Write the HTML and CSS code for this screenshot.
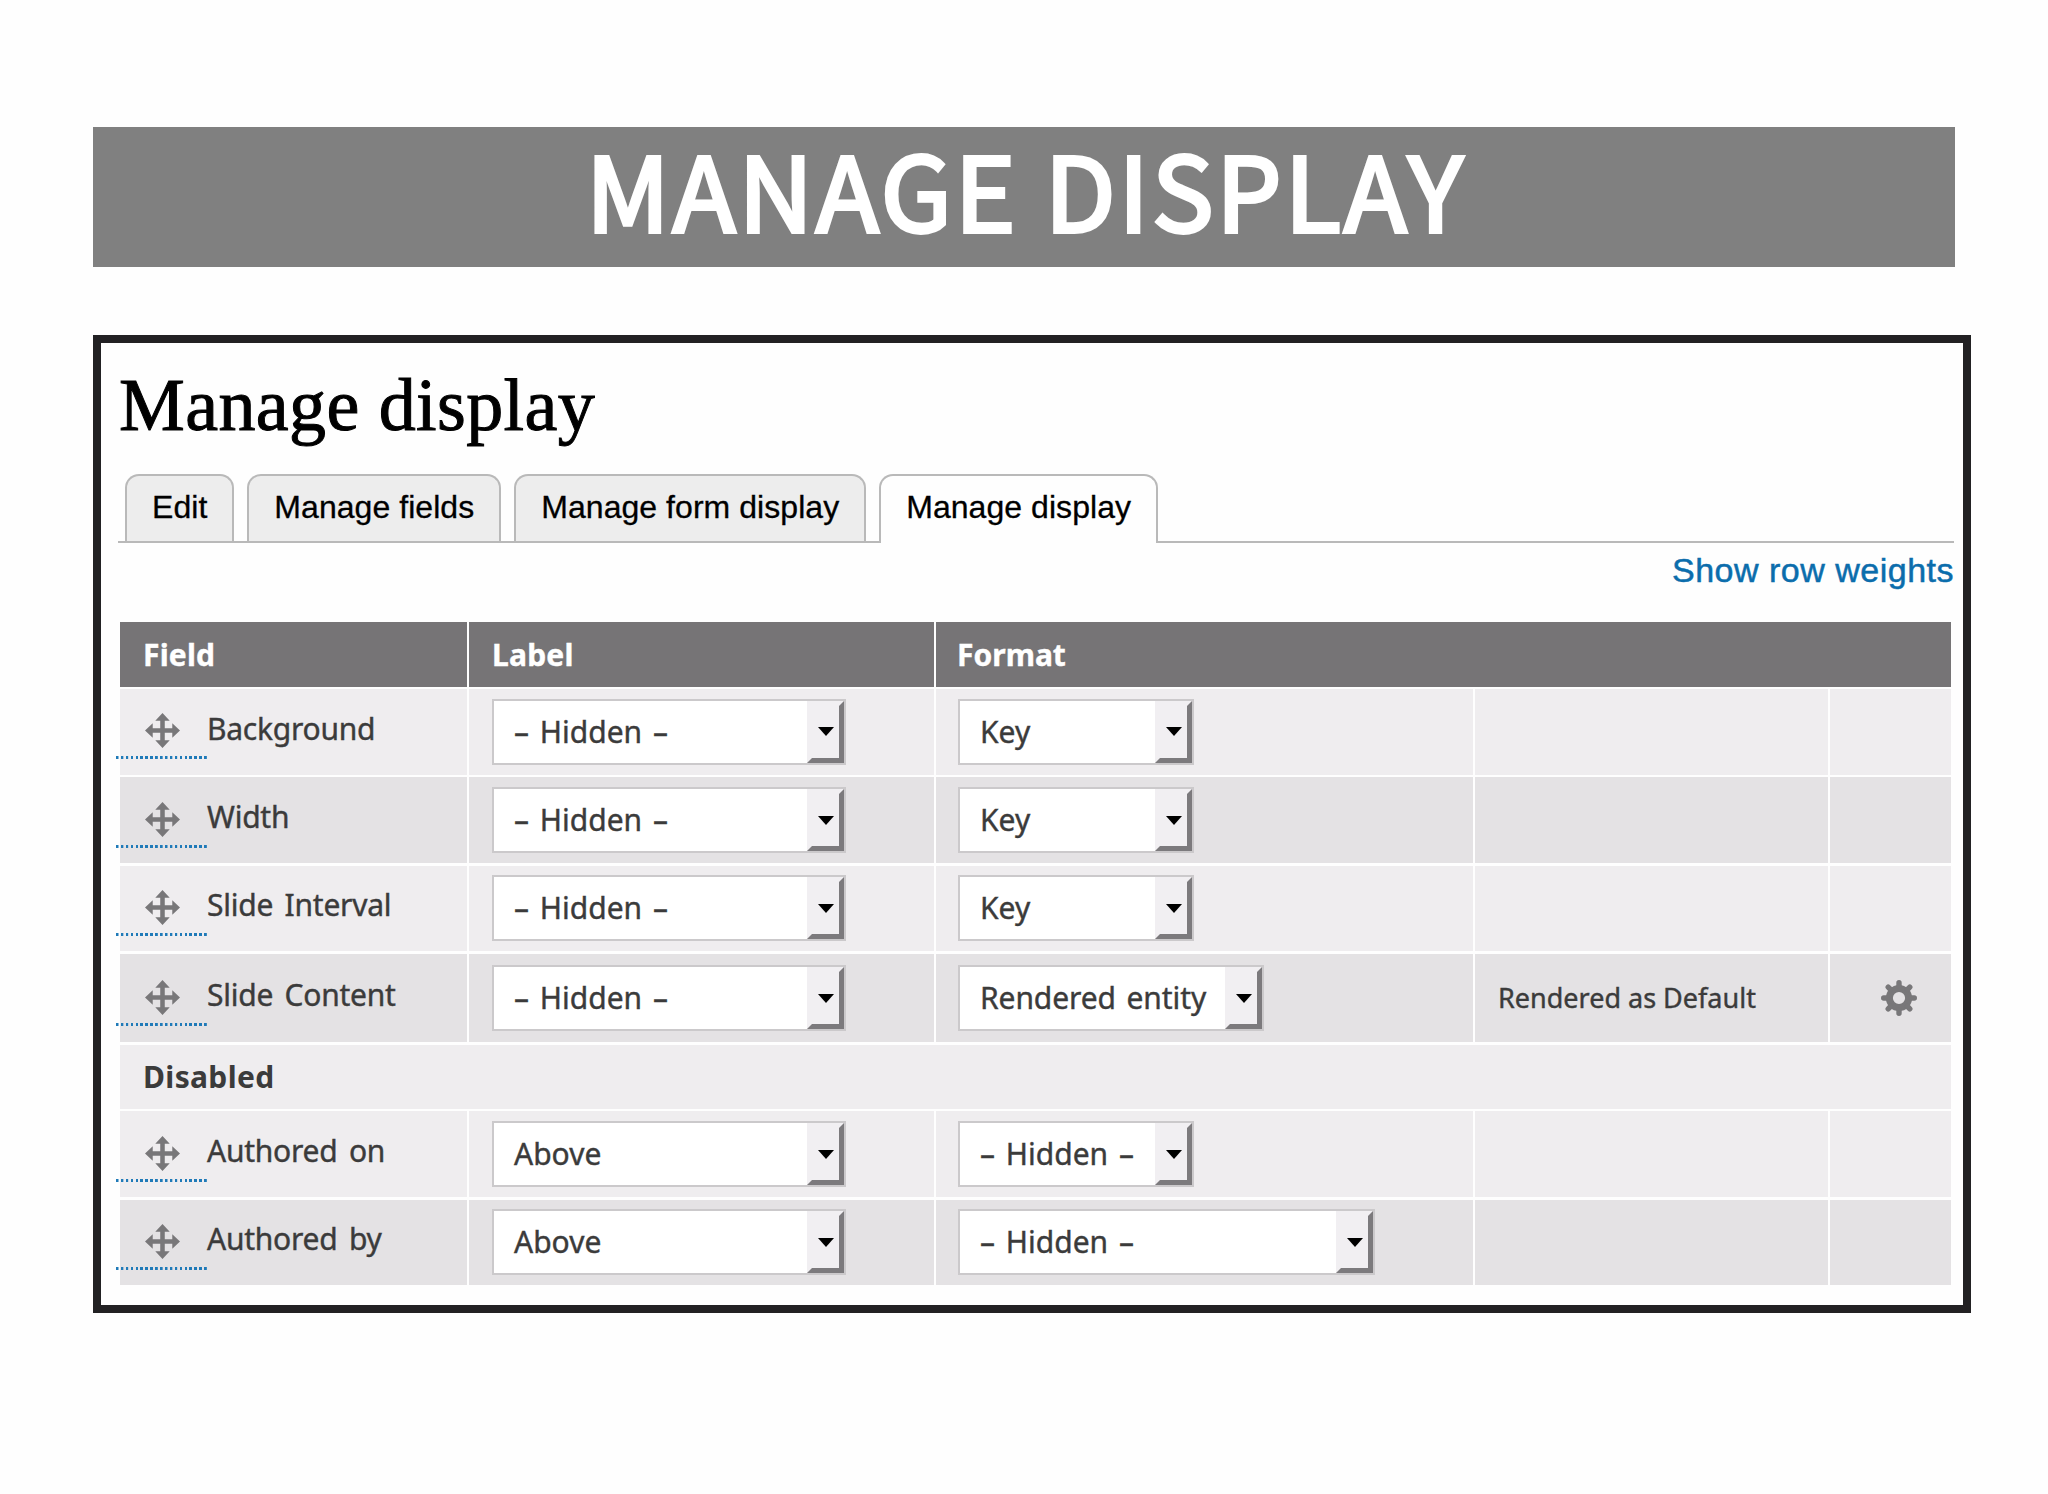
FILE: index.html
```html
<!DOCTYPE html>
<html lang="en">
<head>
    <meta charset="UTF-8">
    <meta name="viewport" content="width=device-width, initial-scale=1.0">
    <title>Manage display</title>
    <link rel="stylesheet" href="styles.css">
</head>
<body>
    <!-- shared icons -->
    <svg class="sprite" width="0" height="0">
        <symbol id="move" viewBox="0 0 34 34">
            <path d="M17 0 L24 7.5 H19.2 V14.8 H26.5 V10 L34 17 L26.5 24 V19.2 H19.2 V26.5 H24 L17 34 L10 26.5 H14.8 V19.2 H7.5 V24 L0 17 L7.5 10 V14.8 H14.8 V7.5 H10 Z"/>
        </symbol>
        <symbol id="gear" viewBox="-18 -18 36 36">
            <circle r="9.6" fill="none" stroke="#787779" stroke-width="7"/>
            <g stroke="#787779" stroke-width="5.4" stroke-linecap="round">
                <path d="M0 -12 V-15.3 M0 12 V15.3 M-12 0 H-15.3 M12 0 H15.3"/>
                <path d="M8.5 -8.5 L10.8 -10.8 M-8.5 -8.5 L-10.8 -10.8 M8.5 8.5 L10.8 10.8 M-8.5 8.5 L-10.8 10.8"/>
            </g>
        </symbol>
    </svg>

    <h1 class="slide-title">MANAGE DISPLAY</h1>

    <div class="panel">
        <h2 class="page-title">Manage display</h2>
        <nav class="tabs">
            <a class="tab">Edit</a>
            <a class="tab">Manage fields</a>
            <a class="tab">Manage form display</a>
            <a class="tab active">Manage display</a>
        </nav>
        <div class="weights"><a>Show row weights</a></div>

        <div class="table">
            <div class="row head">
                <div class="cell">Field</div>
                <div class="cell">Label</div>
                <div class="cell wide">Format</div>
            </div>
            <div class="row">
                <div class="cell field"><a class="handle"><svg><use href="#move"/></svg></a><span class="name">Background</span></div>
                <div class="cell"><div class="select label"><span>– Hidden –</span><i></i></div></div>
                <div class="cell format"><div class="select short"><span>Key</span><i></i></div></div>
                <div class="cell"></div>
                <div class="cell"></div>
            </div>
            <div class="row even">
                <div class="cell field"><a class="handle"><svg><use href="#move"/></svg></a><span class="name">Width</span></div>
                <div class="cell"><div class="select label"><span>– Hidden –</span><i></i></div></div>
                <div class="cell format"><div class="select short"><span>Key</span><i></i></div></div>
                <div class="cell"></div>
                <div class="cell"></div>
            </div>
            <div class="row">
                <div class="cell field"><a class="handle"><svg><use href="#move"/></svg></a><span class="name">Slide Interval</span></div>
                <div class="cell"><div class="select label"><span>– Hidden –</span><i></i></div></div>
                <div class="cell format"><div class="select short"><span>Key</span><i></i></div></div>
                <div class="cell"></div>
                <div class="cell"></div>
            </div>
            <div class="row even tall">
                <div class="cell field"><a class="handle"><svg><use href="#move"/></svg></a><span class="name">Slide Content</span></div>
                <div class="cell"><div class="select label"><span>– Hidden –</span><i></i></div></div>
                <div class="cell format"><div class="select medium"><span>Rendered entity</span><i></i></div></div>
                <div class="cell summary">Rendered as Default</div>
                <div class="cell"><svg class="gear"><use href="#gear"/></svg></div>
            </div>
            <div class="row region">
                <div class="cell full">Disabled</div>
            </div>
            <div class="row">
                <div class="cell field"><a class="handle"><svg><use href="#move"/></svg></a><span class="name">Authored on</span></div>
                <div class="cell"><div class="select label"><span>Above</span><i></i></div></div>
                <div class="cell format"><div class="select short"><span>– Hidden –</span><i></i></div></div>
                <div class="cell"></div>
                <div class="cell"></div>
            </div>
            <div class="row even">
                <div class="cell field"><a class="handle"><svg><use href="#move"/></svg></a><span class="name">Authored by</span></div>
                <div class="cell"><div class="select label"><span>Above</span><i></i></div></div>
                <div class="cell format"><div class="select long"><span>– Hidden –</span><i></i></div></div>
                <div class="cell"></div>
                <div class="cell"></div>
            </div>
        </div>
    </div>
</body>
</html>
```
FILE: styles.css
```css
* {
    box-sizing: border-box;
}
body {
    margin: 0;
    padding: 127px 77px 0 93px;
    height: 1494px;
    overflow: hidden;
    background-color: #fefefe;
    color: #3b3b3b;
    font-family: "Noto Sans", "Open Sans", sans-serif;
}
.sprite {
    position: absolute;
}
.slide-title {
    width: 1862px;
    height: 140px;
    margin: 0 0 68px;
    padding-left: 4px;
    background-color: #808080;
    color: #fff;
    font-family: "Noto Sans CJK SC", sans-serif;
    font-size: 103px;
    font-weight: 400;
    line-height: 122px;
    letter-spacing: 3.1px;
    -webkit-text-stroke: 3.8px #fff;
    text-align: center;
    white-space: nowrap;
}
.panel {
    width: 1878px;
    height: 978px;
    border: 8px solid #222123;
    padding: 0 9px 0 17px;
    background-color: #fefefe;
}
.page-title {
    height: 131px;
    margin: 0;
    padding-left: 1px;
    color: #000;
    font-family: "Liberation Serif", serif;
    font-size: 74px;
    font-weight: 400;
    line-height: 124px;
    letter-spacing: 0.4px;
    -webkit-text-stroke: 1px #000;
    white-space: nowrap;
}
.tabs {
    display: flex;
    gap: 13px;
    height: 69px;
    padding-left: 7px;
    border-bottom: 2px solid #b9b9b9;
    font-family: "Liberation Sans", Arial, sans-serif;
    font-size: 32px;
    line-height: 62px;
    letter-spacing: 0.05px;
    color: #000;
}
.tab {
    height: 67px;
    padding: 0 25px;
    border: 2px solid #b9b9b9;
    border-bottom: 0;
    border-radius: 14px 14px 0 0;
    background-color: #ededed;
    -webkit-text-stroke: 0.3px #000;
    white-space: nowrap;
}
.tab.active {
    height: 69px;
    background-color: #fefefe;
}
.weights {
    height: 79px;
    font-family: "Liberation Sans", Arial, sans-serif;
    font-size: 34px;
    line-height: 54px;
    letter-spacing: 0.5px;
    text-align: right;
    color: #0b6dac;
    -webkit-text-stroke: 0.5px #0b6dac;
}
.table {
    display: flex;
    flex-direction: column;
    gap: 2.5px;
    width: 1831px;
    margin-left: 2px;
}
.row {
    display: grid;
    grid-template-columns: 347px 465px 537px 353px 121px;
    gap: 2px;
    height: 85.8px;
}
.row.tall {
    height: 88.5px;
}
.cell {
    display: flex;
    align-items: center;
    padding-left: 23px;
    background-color: #efedef;
    white-space: nowrap;
}
.even .cell {
    background-color: #e4e2e4;
}
.row.head {
    height: 64.5px;
}
.head .cell {
    background-color: #767476;
    color: #fff;
    font-size: 30px;
    font-weight: 700;
    letter-spacing: 0.2px;
    -webkit-text-stroke: 0.4px #fff;
}
.head .wide {
    grid-column: span 3;
    padding-left: 21px;
    letter-spacing: 0;
}
.cell.format {
    padding-left: 22px;
}
.row.region {
    height: 63.9px;
}
.full {
    grid-column: span 5;
    font-size: 30px;
    font-weight: 700;
    letter-spacing: 0.35px;
}
.cell.field {
    padding: 0;
}

/* tabledrag handle, the dotted underline sticks out of the table */
.handle {
    flex: none;
    width: 91px;
    height: 56px;
    margin: -1px 0 0 -4px;
    padding: 10px 0 0 29px;
    background: repeating-linear-gradient(90deg, #1f7ab8 0, #1f7ab8 2.2px, transparent 2.8px, transparent 4.9px) bottom / 100% 3px no-repeat;
}
.handle svg {
    display: block;
    width: 35px;
    height: 35px;
    fill: #787779;
}
.name {
    font-size: 30px;
    margin-top: -7px;
    letter-spacing: -0.25px;
    word-spacing: 4px;
    -webkit-text-stroke: 0.4px #3b3b3b;
}
.select {
    display: flex;
    justify-content: space-between;
    height: 66px;
    border: 2px solid #cbc9cb;
    background-color: #fff;
    font-size: 30px;
    line-height: 62px;
    word-spacing: 3px;
    -webkit-text-stroke: 0.4px #3b3b3b;
}
.select span {
    padding-left: 20px;
}
.select i {
    display: flex;
    align-items: center;
    justify-content: center;
    width: 37px;
    border: 5px solid #f1eff2;
    border-right-color: #7c7a7d;
    border-bottom-color: #7c7a7d;
    background-color: #f1eff2;
}
.select i::before {
    content: "";
    border: 8px solid transparent;
    border-top: 9px solid #000;
    border-bottom: 0;
}
.select.label {
    width: 354px;
}
.select.short {
    width: 236px;
}
.select.medium {
    width: 306px;
    letter-spacing: -0.1px;
}
.select.long {
    width: 417px;
}
.summary {
    padding-bottom: 2px;
    font-size: 27px;
    -webkit-text-stroke: 0.4px #3b3b3b;
}
.gear {
    width: 36px;
    height: 36px;
    margin-left: 28px;
}
```
